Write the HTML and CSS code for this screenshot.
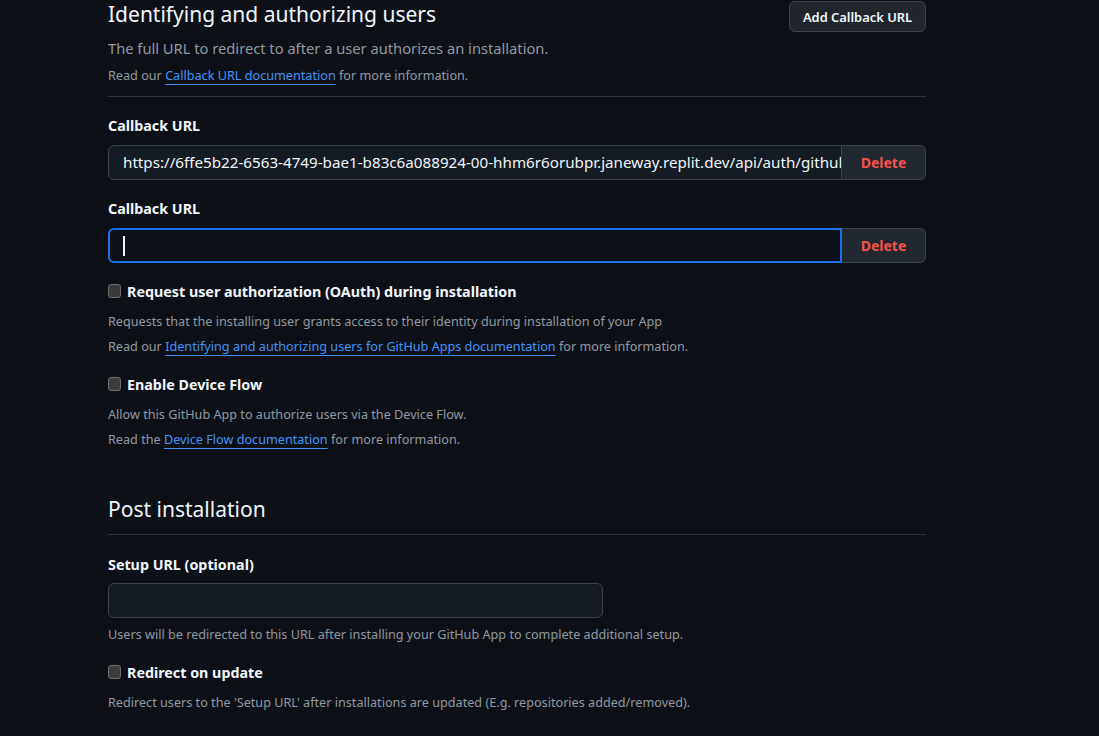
FILE: index.html
```html
<!DOCTYPE html>
<html lang="en">
<head>
<meta charset="utf-8">
<title>GitHub App settings</title>
<link rel="stylesheet" href="styles.css">
</head>
<body>
<div class="page">
  <div class="section-head">
    <h2 class="title">Identifying and authorizing users</h2>
    <button class="btn" type="button">Add Callback URL</button>
  </div>
  <p class="desc">The full URL to redirect to after a user authorizes an installation.</p>
  <p class="note note-first">Read our <a href="#" class="link">Callback URL documentation</a> for more information.</p>
  <div class="rule"></div>

  <div class="label first-label">Callback URL</div>
  <div class="input-group">
    <div class="input filled"><span class="value">https://6ffe5b22-6563-4749-bae1-b83c6a088924-00-hhm6r6orubpr.janeway.replit.dev/api/auth/github/callback</span></div>
    <button class="btn-delete" type="button">Delete</button>
  </div>

  <div class="label">Callback URL</div>
  <div class="input-group">
    <div class="input focused"><span class="caret"></span></div>
    <button class="btn-delete" type="button">Delete</button>
  </div>

  <div class="check-row">
    <span class="checkbox"></span>
    <span class="check-label">Request user authorization (OAuth) during installation</span>
  </div>
  <p class="note note-a">Requests that the installing user grants access to their identity during installation of your App</p>
  <p class="note note-b">Read our <a href="#" class="link">Identifying and authorizing users for GitHub Apps documentation</a> for more information.</p>

  <div class="check-row check-second">
    <span class="checkbox"></span>
    <span class="check-label">Enable Device Flow</span>
  </div>
  <p class="note note-a">Allow this GitHub App to authorize users via the Device Flow.</p>
  <p class="note note-b">Read the <a href="#" class="link">Device Flow documentation</a> for more information.</p>

  <h2 class="title title-post">Post installation</h2>
  <div class="rule"></div>

  <div class="label setup-label">Setup URL (optional)</div>
  <div class="input setup"></div>
  <p class="note note-setup">Users will be redirected to this URL after installing your GitHub App to complete additional setup.</p>

  <div class="check-row check-redirect">
    <span class="checkbox"></span>
    <span class="check-label">Redirect on update</span>
  </div>
  <p class="note note-a">Redirect users to the 'Setup URL' after installations are updated (E.g. repositories added/removed).</p>
</div>
</body>
</html>
```

FILE: styles.css
```css
html, body {
  margin: 0;
  padding: 0;
  background: #0d1117;
  height: 100%;
  overflow: hidden;
}

body {
  font-family: "Noto Sans", "Open Sans", sans-serif;
  color: #f0f6fc;
}

.page {
  width: 818px;
  margin-left: 108px;
}

.section-head {
  display: flex;
  justify-content: space-between;
  align-items: flex-start;
  height: 30px;
}

.title {
  margin: 0;
  font-size: 21px;
  font-weight: 400;
  line-height: 28px;
  color: #f0f6fc;
}

.title-post {
  margin-top: 46px;
  margin-bottom: 3px;
}

.btn {
  margin-top: 1px;
  height: 31px;
  width: 137px;
  padding: 0;
  background: #21262d;
  border: 1px solid #3d444d;
  border-radius: 6px;
  color: #f0f6fc;
  font-family: inherit;
  font-size: 12.9px;
  font-weight: 600;
}

.desc {
  margin: 6px 0 0;
  font-size: 14.7px;
  line-height: 24px;
  color: #9198a1;
}

.note {
  margin: 0;
  font-size: 12.65px;
  line-height: 20px;
  color: #9198a1;
}

.note-first { margin-top: 5px; }
.note-a { margin-top: 9px; }
.note-b { margin-top: 5px; }
.note-setup { margin-top: 6px; }

.link {
  color: #4493f8;
  text-decoration: underline;
  text-underline-offset: 4px;
  text-decoration-thickness: 1px;
}

.rule {
  margin-top: 11px;
  height: 1px;
  background: #30363d;
}

.label {
  margin-top: 19px;
  font-size: 14.3px;
  font-weight: 700;
  line-height: 20px;
  color: #f0f6fc;
}

.first-label { margin-top: 19px; }
.setup-label { margin-top: 20px; }

.input-group {
  display: flex;
  margin-top: 9px;
  height: 35px;
}

.input {
  box-sizing: border-box;
  height: 35px;
  border: 1px solid #3d444d;
  border-radius: 6px;
  background: #151b23;
  font-size: 15.2px;
  line-height: 33px;
  padding: 0 0 0 14px;
  white-space: nowrap;
  overflow: hidden;
  color: #f0f6fc;
}

.input-group .input {
  flex: 1;
  min-width: 0;
  border-radius: 6px 0 0 6px;
}

.value {
  display: block;
  overflow: hidden;
  text-overflow: clip;
}

.input.focused {
  background: #0d1117;
  border: 2px solid #1f6feb;
  padding: 0 13px;
  display: flex;
  align-items: center;
}

.caret {
  display: block;
  width: 2px;
  height: 20px;
  background: #f0f6fc;
}

.btn-delete {
  box-sizing: border-box;
  width: 84px;
  height: 35px;
  padding: 0;
  background: #212830;
  border: 1px solid #3d444d;
  border-left: none;
  border-radius: 0 6px 6px 0;
  color: #f85149;
  font-family: inherit;
  font-size: 14px;
  font-weight: 700;
}

.check-row {
  display: flex;
  align-items: center;
  gap: 6px;
  margin-top: 19px;
  height: 20px;
}

.check-second { margin-top: 19px; }
.check-redirect { margin-top: 19px; }

.checkbox {
  box-sizing: border-box;
  width: 13px;
  height: 14px;
  margin-top: -2px;
  background: #3b3b3b;
  border: 1px solid #6e6e6e;
  border-radius: 3px;
}

.check-label {
  font-size: 14.3px;
  font-weight: 700;
  line-height: 20px;
  color: #f0f6fc;
}

.setup {
  margin-top: 8px;
  width: 495px;
}
```
